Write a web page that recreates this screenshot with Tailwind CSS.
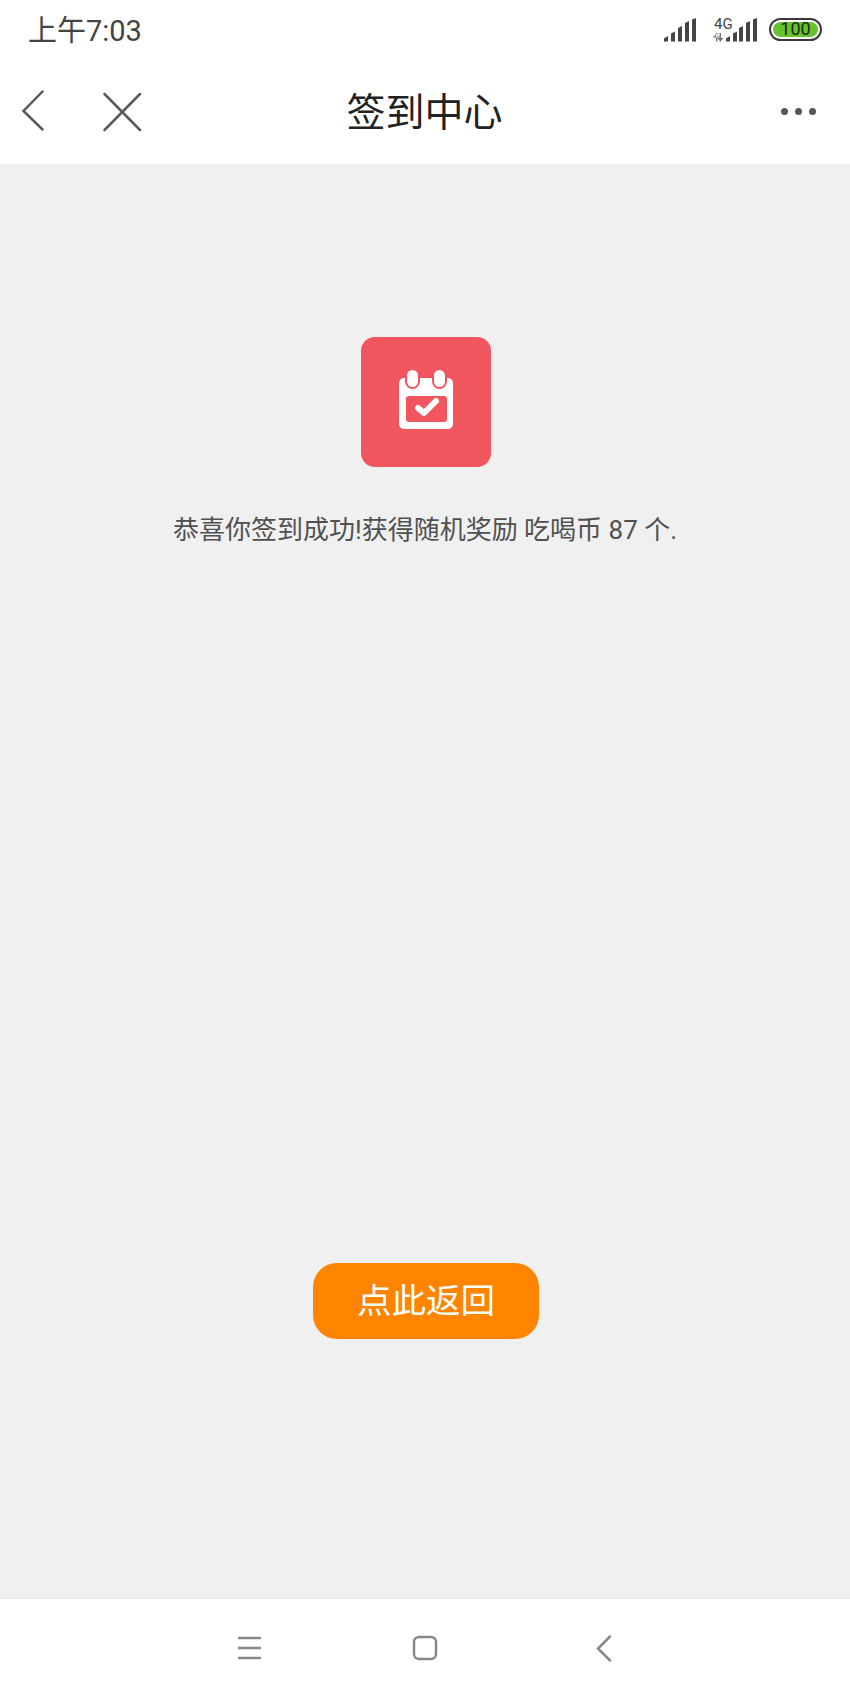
<!DOCTYPE html>
<html lang="zh-CN">
<head>
  <meta charset="UTF-8" />
  <meta name="viewport" content="width=device-width, initial-scale=1.0"/>
  <title>签到中心</title>
  <script src="https://cdn.jsdelivr.net/npm/@tailwindcss/browser@4"></script>
</head>
<body class="bg-white font-['Roboto','Noto_Sans_CJK_SC',sans-serif]">
  <div class="w-[850px] h-[1700px] flex flex-col overflow-hidden">

    <!-- Status bar -->
    <div class="h-[60px] shrink-0 flex items-center justify-between pl-[28px] pr-[28px]">
      <span class="text-[29px] leading-none text-[#444] mt-[2px]">上午7:03</span>
      <div class="flex items-start mt-[-1px]">
        <svg width="33" height="24" viewBox="0 0 33 24" fill="#444">
          <path d="M0 23.500v-3l4-2.500v5.500zM7 23.500v-8l4-2v10zM14 23.500V10l4-2v15.500zM21 23.500V5l4-2v20.500zM28 23.500V1.500l4-1.500v23.500z"/>
        </svg>
        <div class="relative w-[46px] h-[24px] ml-[15px]">
          <span class="absolute left-[2px] top-[-2px] text-[15px] leading-[16px] text-[#444]">4G</span>
          <svg width="46" height="24" viewBox="0 0 46 24" fill="#444" class="absolute left-0 top-0">
            <path d="M4 15h1.500v8.500H4zM0.500 19.500h7L4.500 16zM7.500 15H9v8.500H7.500zM5.500 20h6l-3 3.500z" opacity="0.75"/>
            <path d="M14 23.500v-3l4-2.500v5.500zM21 23.500v-8l4-2v10zM27 23.500V10l4-2v15.500zM34 23.500V5l4-2v20.500zM41 23.500V1.500l4-1.500v23.500z"/>
          </svg>
        </div>
        <div class="ml-[11px] w-[53px] h-[23px] rounded-full border-[2px] border-[#3a3a3a] p-[2px]">
          <div class="h-full rounded-full bg-[#66c22e] flex items-center justify-center text-[18px] leading-none text-[#1c2b10]">100</div>
        </div>
      </div>
    </div>

    <!-- Title bar -->
    <div class="relative h-[104px] shrink-0 flex items-center justify-center">
      <svg width="24" height="42" viewBox="0 0 24 42" fill="none" stroke="#5a5a5a" stroke-width="2.500" stroke-linecap="round" class="absolute left-[21px] top-[30px]">
        <path d="M21.500 1.500 2.500 21l19 18.500"/>
      </svg>
      <svg width="40" height="40" viewBox="0 0 40 40" fill="none" stroke="#5a5a5a" stroke-width="2.500" stroke-linecap="round" class="absolute left-[103px] top-[32px]">
        <path d="M1.500 2l35.500 36M37 2 1.500 38"/>
      </svg>
      <span class="text-[39px] leading-none text-[#222] mr-[1px] mt-[2px]">签到中心</span>
      <div class="absolute right-[34px] top-[48px] flex gap-[7px]">
        <span class="w-[7px] h-[7px] rounded-full bg-[#555]"></span>
        <span class="w-[7px] h-[7px] rounded-full bg-[#555]"></span>
        <span class="w-[7px] h-[7px] rounded-full bg-[#555]"></span>
      </div>
    </div>

    <!-- Content -->
    <main class="flex-1 bg-[#f0f0f0] flex flex-col items-center pt-[173px]">
      <div class="ml-[2px] w-[130px] h-[130px] rounded-[14px] bg-[#f1565f] flex items-center justify-center">
        <svg width="54" height="59" viewBox="0 0 54 59" fill="none" class="mt-[-5px]">
          <rect x="0" y="8" width="54" height="51" rx="5" fill="#fff"/>
          <rect x="7" y="26" width="41" height="26" rx="3" fill="#f1565f"/>
          <rect x="7" y="-1" width="13" height="19" rx="6.500" fill="#fff" stroke="#f1565f" stroke-width="2"/>
          <rect x="34" y="-1" width="13" height="19" rx="6.500" fill="#fff" stroke="#f1565f" stroke-width="2"/>
          <path d="M19 38l6 5 12-12" stroke="#fff" stroke-width="6" stroke-linecap="round" stroke-linejoin="round"/>
        </svg>
      </div>
      <p class="mt-[45px] text-[26px] leading-[36px] text-[#505050]">恭喜你签到成功!获得随机奖励 吃喝币 87 个.</p>
      <button class="ml-[2px] mt-[715px] w-[226px] h-[76px] rounded-[24px] bg-[#ff8400] text-white text-[34.500px] leading-none">点此返回</button>
    </main>

    <!-- Nav bar -->
    <div class="h-[102px] shrink-0 border-t border-[#e6e6e6] flex items-center relative">
      <svg width="24" height="24" viewBox="0 0 24 24" fill="none" stroke="#888" stroke-width="2.500" class="absolute left-[238px] top-[37px]">
        <path d="M0 2h23M0 12h23M0 22h23"/>
      </svg>
      <svg width="26" height="26" viewBox="0 0 26 26" fill="none" stroke="#888" stroke-width="2.500" class="absolute left-[412px] top-[36px]">
        <rect x="2" y="2" width="22" height="22" rx="5"/>
      </svg>
      <svg width="16" height="28" viewBox="0 0 16 28" fill="none" stroke="#888" stroke-width="2.500" stroke-linecap="round" class="absolute left-[596px] top-[36px]">
        <path d="M14 1.500 2 13.500l12 12"/>
      </svg>
    </div>
  </div>
</body>
</html>
